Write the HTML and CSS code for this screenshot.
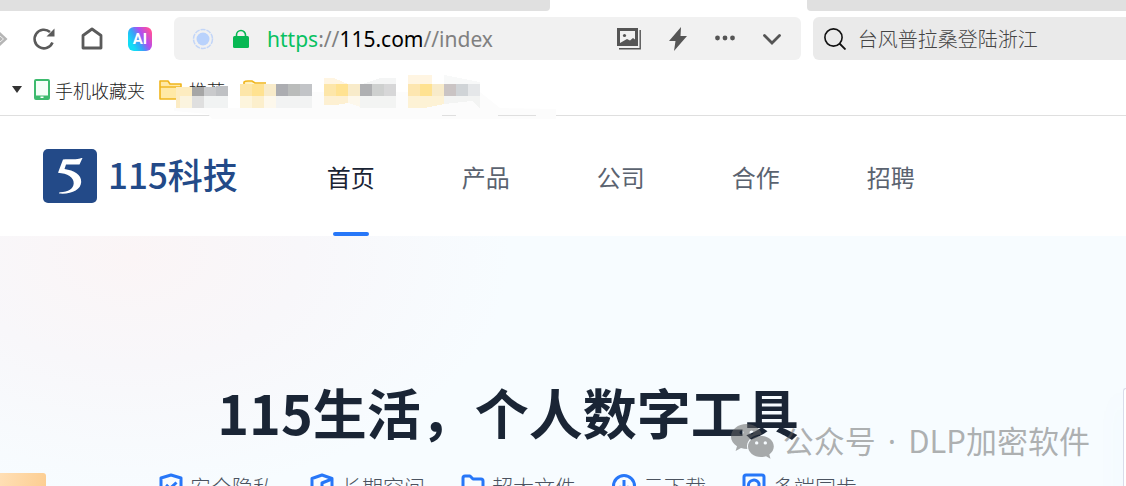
FILE: index.html
```html
<!DOCTYPE html>
<html lang="zh-CN">
<head>
  <meta charset="UTF-8">
  <title>115科技</title>
  <link rel="stylesheet" href="styles.css">
</head>
<body>

  <!-- Tab strip -->
  <div class="tabs">
    <div class="tab tab-left"></div>
    <div class="tab tab-right"></div>
  </div>

  <!-- Toolbar -->
  <div class="toolbar">
    <div class="tools">
      <button class="forward" aria-label="前进">
        <svg width="8" height="18" viewBox="0 0 8 18"><path d="M-1 1L7.500 9L-1 17z" fill="#b5b5b5"/><path d="M0 6L3.500 9L0 12" fill="none" stroke="#efefef" stroke-width="1"/></svg>
      </button>
      <button aria-label="刷新">
        <svg width="24" height="24" viewBox="0 0 24 24"><path d="M20.500 15.500A9.300 9.300 0 1 1 18 5" fill="none" stroke="#5a5a5a" stroke-width="2.600"/><path d="M22.500 1.500V9.500H14.500z" fill="#5a5a5a"/></svg>
      </button>
      <button aria-label="主页">
        <svg width="24" height="24" viewBox="0 0 24 24"><path d="M3 8.500L12 2L21 8.500V21H3z" fill="none" stroke="#5a5a5a" stroke-width="2.800" stroke-linejoin="round"/></svg>
      </button>
      <button class="ai" aria-label="AI 助手">AI</button>
    </div>

    <div class="address">
      <svg width="22" height="22" viewBox="0 0 22 22"><circle cx="11" cy="11" r="9.500" fill="none" stroke="#c3d6f8" stroke-width="1.500" stroke-dasharray="5 1"/><circle cx="11" cy="11" r="6.500" fill="#b9d2fc"/></svg>
      <svg class="lock" width="16" height="20" viewBox="0 0 16 20"><path d="M3.500 9V6a4.500 4.500 0 0 1 9 0v3" fill="none" stroke="#07b853" stroke-width="1.600"/><rect y="7" width="16" height="12" rx="1.500" fill="#07b853"/></svg>
      <div class="url" role="textbox" contenteditable="true" spellcheck="false" aria-label="网址"><span class="scheme">https</span>://<span class="host">115.com</span>//index</div>
      <div class="address-actions">
        <button aria-label="图片">
          <svg width="24" height="22" viewBox="0 0 24 22"><path d="M0 0H21V18H0zM3 3V15L10 11L13 12.500L16 10L18 11.500V3z" fill="#555" fill-rule="evenodd"/><circle cx="7.500" cy="7.500" r="1.600" fill="#555"/><path d="M23.200 2V20.700H2" fill="none" stroke="#555" stroke-width="1.400"/></svg>
        </button>
        <button aria-label="极速模式">
          <svg width="18" height="24" viewBox="0 0 18 24"><path d="M12 0L0 14H6.500L5 24L18 9H11.500z" fill="#555"/></svg>
        </button>
        <button aria-label="更多">
          <svg width="20" height="22" viewBox="0 0 20 22"><g fill="#555"><circle cx="2.500" cy="10" r="2.400"/><circle cx="10" cy="10" r="2.400"/><circle cx="17.500" cy="10" r="2.400"/></g></svg>
        </button>
        <button aria-label="展开">
          <svg width="18" height="22" viewBox="0 0 18 22"><path d="M1.500 7.500L9 15L16.500 7.500" fill="none" stroke="#555" stroke-width="2.800" stroke-linecap="round"/></svg>
        </button>
      </div>
    </div>

    <label class="search">
      <svg width="22" height="22" viewBox="0 0 22 22"><circle cx="9.500" cy="9.500" r="8.600" fill="none" stroke="#111" stroke-width="1.600"/><path d="M15.500 15.500L21.500 21.500" stroke="#111" stroke-width="1.800"/></svg>
      <input type="text" placeholder="台风普拉桑登陆浙江" aria-label="搜索">
    </label>
  </div>

  <!-- Bookmarks -->
  <div class="bookmarks">
    <button class="caret" aria-label="收藏菜单">
      <svg width="10" height="7" viewBox="0 0 10 7"><path d="M0 0H10L5 7z" fill="#333"/></svg>
    </button>
    <a href="#">
      <svg width="16" height="21" viewBox="0 0 16 21"><rect x="1" y="1" width="14" height="19" rx="1" fill="#f5fff8" stroke="#3dbb6e" stroke-width="2"/><path d="M1 16.500H15V20H1z" fill="#3dbb6e"/><rect x="6.500" y="17.500" width="3" height="1.500" fill="#fff"/></svg>
      手机收藏夹
    </a>
    <a href="#" class="folder">
      <svg width="23" height="20" viewBox="0 0 23 20"><path d="M1 1H9L11 4H22V19H1z" fill="#ffe9a6" stroke="#f0b51c" stroke-width="1.600" stroke-linejoin="round"/><path d="M1 7H22" stroke="#f0b51c" stroke-width="1.400"/></svg>
      推荐
    </a>
    <!-- Mosaic over the private bookmarks -->
    <svg class="mosaic" width="388" height="50" viewBox="172 72 388 50">
      <path d="M174 108H246L280 92H480L500 108L556 109V119H212L208 114L174 111z" fill="#fcfcfc"/>
      <path d="M442 115.500H456M498 115.500H536" stroke="#dfdfdf"/>
      <path d="M244 84V82Q245 81 248 81H252L255 83H266" fill="#fff0b8" stroke="#f0b51c" stroke-width="1.600"/>
      <g shape-rendering="crispEdges">
        <rect x="176" y="87" width="16" height="9" fill="#fdecc0"/><rect x="192" y="87" width="12" height="9" fill="#a6a6a6"/><rect x="204" y="87" width="12" height="9" fill="#c9cacc"/><rect x="216" y="86" width="12" height="10" fill="#bfc1c4"/>
        <rect x="176" y="96" width="4" height="12" fill="#fcecc5"/><rect x="180" y="96" width="12" height="12" fill="#fbf4df"/><rect x="192" y="96" width="12" height="12" fill="#dfdfdf"/><rect x="204" y="96" width="24" height="12" fill="#f1f3f3"/>
        <rect x="240" y="84" width="12" height="12" fill="#fde6a9"/><rect x="252" y="84" width="12" height="12" fill="#ffe291"/><rect x="264" y="84" width="12" height="12" fill="#f8ebca"/><rect x="276" y="84" width="12" height="12" fill="#acadb1"/><rect x="288" y="84" width="12" height="12" fill="#babcbb"/><rect x="300" y="84" width="12" height="12" fill="#c2c4c7"/>
        <rect x="240" y="96" width="12" height="12" fill="#fdf5dd"/><rect x="252" y="96" width="12" height="12" fill="#fcefcc"/><rect x="264" y="96" width="12" height="12" fill="#fdf8ec"/><rect x="276" y="96" width="36" height="12" fill="#f2f3f3"/>
        <path d="M324 78H334L348 84H324z" fill="#fff5e2"/><path d="M363 84L380 78H396V84z" fill="#f4f5f5"/>
        <rect x="324" y="84" width="12" height="12" fill="#fde6a9"/><rect x="336" y="84" width="12" height="12" fill="#ffe291"/><rect x="348" y="84" width="12" height="12" fill="#f8ebca"/><rect x="360" y="84" width="12" height="12" fill="#afb0b2"/><rect x="372" y="84" width="12" height="12" fill="#ced0cf"/><rect x="384" y="84" width="12" height="12" fill="#d7d7d8"/>
        <path d="M324 96H348V103L336 105H324z" fill="#fdf0d2"/><path d="M348 96H360V107L348 103z" fill="#fdf8ec"/><rect x="360" y="96" width="36" height="12" fill="#f3f4f3"/>
        <path d="M408 75H432V84H408z" fill="#fff5e2"/><path d="M444 75L480 82V84H444z" fill="#f8f9f9"/>
        <rect x="408" y="84" width="12" height="12" fill="#fde6b0"/><rect x="420" y="84" width="12" height="12" fill="#ffe291"/><rect x="432" y="84" width="12" height="12" fill="#f8ebca"/><rect x="444" y="84" width="12" height="12" fill="#cac4c4"/><rect x="456" y="84" width="12" height="12" fill="#d0d4d7"/><rect x="468" y="84" width="12" height="12" fill="#e5e7e9"/>
        <path d="M408 96H444V104L424 108H408z" fill="#fdf2d5"/><path d="M444 96H480V108L472 101L444 104z" fill="#f3f4f3"/>
      </g>
    </svg>
  </div>

  <!-- Site header -->
  <header class="site-header">
    <a href="#" class="logo">
      <svg width="54" height="54" viewBox="0 0 54 54"><rect width="54" height="54" rx="5" fill="#234a88"/><path d="M20 10.500C25 10 32 10.800 36 9.700C37.500 9.300 38 9 39.500 9L36.500 15.500H23L21.500 20C31 21.500 38.500 25.500 38.200 33C37.800 41 28.500 45.500 16 44.500L16.500 43.300C25 43.500 30.500 39.800 30.700 34.300C30.900 28 24.500 24.500 15 23.700z" fill="#fff"/></svg>
      <span>115科技</span>
    </a>
    <nav class="menu">
      <a href="#" class="active">首页</a>
      <a href="#">产品</a>
      <a href="#">公司</a>
      <a href="#">合作</a>
      <a href="#">招聘</a>
    </nav>
  </header>

  <!-- Hero -->
  <main class="hero">
    <div class="hero-text">
      <h1>115生活，个人数字工具</h1>
      <ul class="features">
        <li>
          <svg width="24" height="26" viewBox="0 0 24 26"><path d="M12 2L22 5V15Q22 21 12 24Q2 21 2 15V5z"/><path d="M7 12L11 15.500L17.500 9.500"/></svg>
          安全隐私
        </li>
        <li>
          <svg width="24" height="26" viewBox="0 0 24 26"><path d="M12 2L22 5.500V19L12 24L2 19V5.500z"/><path d="M22 6L12 10V16"/></svg>
          长期空间
        </li>
        <li>
          <svg width="24" height="26" viewBox="0 0 24 26"><path d="M2 23V5Q2 3 4 3H9L12 6H20Q22 6 22 8V23z"/></svg>
          超大文件
        </li>
        <li>
          <svg width="24" height="26" viewBox="0 0 24 26"><circle cx="12" cy="13" r="10.500"/><path d="M12 7V18M7 13.500L12 18L17 13.500"/></svg>
          云下载
        </li>
        <li>
          <svg width="24" height="26" viewBox="0 0 24 26"><rect x="2" y="2" width="20" height="21" rx="2"/><path d="M6.500 13.500A5.500 5.500 0 0 1 17 10.500V13M17 14A5.500 5.500 0 0 1 7.500 17"/></svg>
          多端同步
        </li>
      </ul>
    </div>
    <div class="card-left"></div>
    <div class="card-right"></div>
    <div class="watermark">
      <svg width="44" height="36" viewBox="0 0 44 36"><path fill-rule="evenodd" d="M15.500 1C7 1 0 6.500 0 13.500C0 17.500 2.300 21 6 23.300L4.600 28L10 25.100Q13 26 16.300 26C14.500 18 21 11.500 30.800 11.500C29.500 5.300 23 1 15.500 1zM10.500 7.500a2 2 0 1 1 0 4a2 2 0 1 1 0-4zM20.500 7.500a2 2 0 1 1 0 4a2 2 0 1 1 0-4z"/><path fill-rule="evenodd" d="M30 13C22.800 13 17 17.700 17 23.500S22.800 34 30 34Q32.700 34 35 33.200L39.500 35.800L38.300 31.500C41 29.500 42.800 26.700 42.800 23.500C42.800 17.700 37.200 13 30 13zM25.700 18.200a1.700 1.700 0 1 1 0 3.400a1.700 1.700 0 1 1 0-3.400zM34.300 18.200a1.700 1.700 0 1 1 0 3.400a1.700 1.700 0 1 1 0-3.400z"/></svg>
      <span>公众号<span class="dot"> · </span>DLP加密软件</span>
    </div>
  </main>

</body>
</html>
```
FILE: styles.css
```css
* {
  box-sizing: border-box;
}

body {
  margin: 0;
  height: 100vh;
  display: flex;
  flex-direction: column;
  overflow: hidden;
  background: #fff;
  font-family: "Noto Sans CJK SC", sans-serif;
}

button {
  display: flex;
  padding: 0;
  border: none;
  background: none;
  cursor: pointer;
}

a {
  text-decoration: none;
}

svg {
  display: block;
  flex: none;
}

/* Tab strip */
.tabs {
  display: grid;
  grid-template-columns: 550fr 319fr;
  column-gap: 257px;
  height: 11px;
}

.tab {
  background: #e0e0e0;
}

.tab-left {
  border-bottom-right-radius: 4px;
}

.tab-right {
  border-bottom-left-radius: 4px;
}

/* Toolbar */
.toolbar {
  display: grid;
  grid-template-columns: 162px 2fr 1fr;
  column-gap: 12px;
  padding-top: 6px;
}

.tools {
  display: flex;
  align-items: center;
  gap: 24px;
}

.forward {
  width: 8px;
}

.ai {
  width: 24px;
  height: 24px;
  align-items: center;
  justify-content: center;
  border-radius: 6px;
  background: linear-gradient(60deg, #12dcf5 20%, #3aa0f8 42%, #b14df0 62%, #ff4f9c 90%);
  color: #fff;
  font: bold 15px Roboto, sans-serif;
}

.address {
  display: flex;
  align-items: center;
  height: 43px;
  padding: 0 20px 0 18px;
  border-radius: 6px;
  background: #f1f1f1;
}

.lock {
  margin-left: 19px;
}

.url {
  flex: 1;
  margin-left: 18px;
  color: #808080;
  font: 21px/40px "Noto Sans", sans-serif;
  white-space: nowrap;
  outline: none;
}

.scheme {
  color: #07c160;
}

.host {
  color: #000;
}

.address-actions {
  display: flex;
  align-items: center;
  gap: 28px;
}

.search {
  display: flex;
  align-items: center;
  gap: 12px;
  padding-left: 11px;
  border-radius: 6px 0 0 6px;
  background: #eaeaea;
}

.search input {
  flex: 1;
  min-width: 0;
  padding: 0;
  border: none;
  outline: none;
  background: none;
  font: 300 20px "Noto Sans CJK SC", sans-serif;
}

.search input::placeholder {
  color: #444;
}

/* Bookmarks */
.bookmarks {
  position: relative;
  display: flex;
  align-items: center;
  height: 56px;
  padding: 4px 12px 0;
  border-bottom: 1px solid #dfdfdf;
}

.bookmarks a {
  display: flex;
  align-items: center;
  gap: 5px;
  margin-left: 12px;
  color: #222;
  font-size: 18px;
  font-weight: 300;
  line-height: 24px;
}

.bookmarks .folder {
  gap: 7px;
  margin-left: 14px;
}

.mosaic {
  position: absolute;
  left: 172px;
  top: 12px;
}

/* Site header */
.site-header {
  display: flex;
  align-items: center;
  height: 120px;
  padding-left: 43px;
}

.logo {
  display: flex;
  align-items: center;
  gap: 11px;
  color: #234a88;
  font-size: 35px;
  font-weight: 500;
  line-height: 50px;
}

.logo span {
  padding-bottom: 4px;
}

.menu {
  display: flex;
  gap: 87px;
  height: 100%;
  margin-left: 89px;
}

.menu a {
  position: relative;
  color: #5b6370;
  font-size: 24px;
  line-height: 122px;
}

.menu .active {
  color: #1a2434;
}

.menu .active::after {
  content: "";
  position: absolute;
  left: 6px;
  right: 6px;
  bottom: 0;
  height: 4px;
  border-radius: 2px;
  background: #2777f8;
}

/* Hero */
.hero {
  position: relative;
  flex: 1;
  min-height: 0;
  overflow: hidden;
  background: radial-gradient(ellipse 380px 240px at 130px 20px, #fbf5f6, #f8f7fa 45%, #f7fcff);
}

.hero-text {
  display: flex;
  flex-direction: column;
  align-items: center;
  padding: 136px 110px 0 0;
}

h1 {
  margin: 0;
  color: #1a2535;
  font-size: 54px;
  line-height: 80px;
}

.features {
  display: flex;
  gap: 36px;
  margin: 20px 0 0;
  padding: 0;
  list-style: none;
}

.features li {
  display: flex;
  align-items: center;
  gap: 7px;
  color: #4b5360;
  font-size: 21px;
  font-weight: 300;
  line-height: 28px;
  white-space: nowrap;
}

.features svg {
  fill: none;
  stroke: #2777f8;
  stroke-width: 3;
  stroke-linejoin: round;
}

.card-left {
  position: absolute;
  left: 0;
  top: 237px;
  width: 46px;
  height: 60px;
  border-top-right-radius: 3px;
  background: linear-gradient(100deg, #ffdfb5, #fccb8c);
}

.card-right {
  position: absolute;
  right: 0;
  top: 152px;
  width: 3px;
  height: 140px;
  border: 1px solid #d9dcea;
  border-right: none;
  border-top-left-radius: 4px;
  background: #fff;
  box-shadow: 0 8px 30px rgba(60, 140, 220, 0.12);
}

.watermark {
  position: absolute;
  right: 36px;
  top: 182px;
  display: flex;
  align-items: center;
  gap: 8px;
  color: rgba(100, 100, 100, 0.5);
  font-size: 31px;
  line-height: 44px;
  white-space: nowrap;
}

.watermark .dot {
  padding: 0 4px;
  font-family: "Noto Sans", sans-serif;
}

.watermark svg {
  fill: rgba(100, 100, 100, 0.55);
}
```
